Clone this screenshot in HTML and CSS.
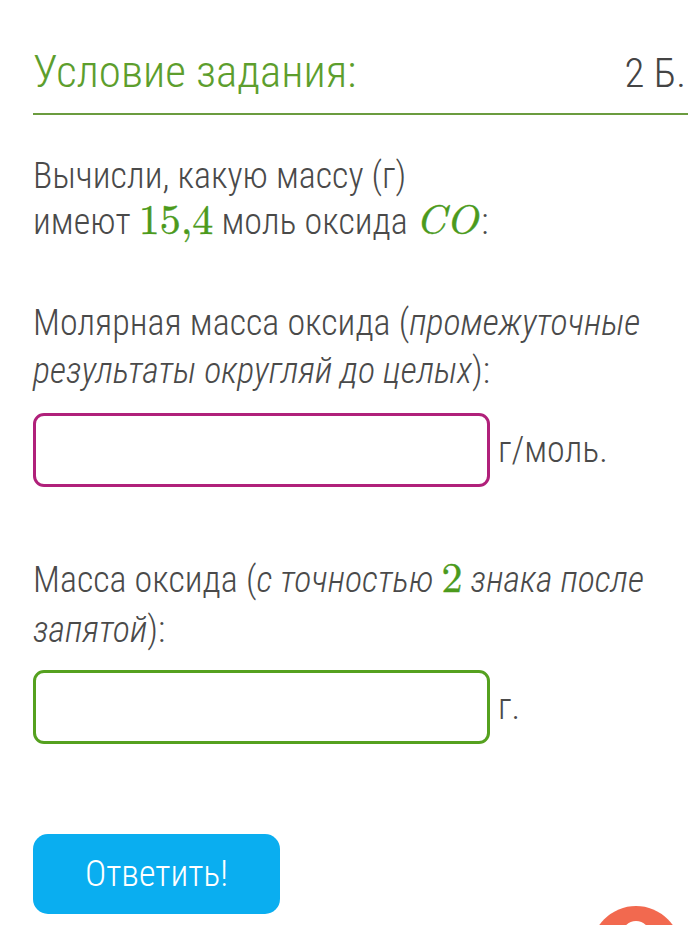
FILE: index.html
```html
<!DOCTYPE html>
<html lang="ru">
<head>
<meta charset="utf-8">
<link rel="stylesheet" href="styles.css">
</head>
<body>
<div class="page">
  <div class="header">
    <h1 class="title">Условие задания:</h1>
    <span class="points">2 Б.</span>
  </div>
  <p class="text q1">Вычисли, какую массу (г)<br>имеют <span class="m">15,4</span> моль оксида <span class="m mi">CO</span>:</p>
  <p class="text q2">Молярная масса оксида (<i>промежуточные результаты округляй до целых</i>):</p>
  <div class="answer a1">
    <div class="field field-pink"></div>
    <span class="unit">г/моль.</span>
  </div>
  <p class="text q3">Масса оксида (<i>с точностью <span class="m">2</span> знака после запятой</i>):</p>
  <div class="answer a2">
    <div class="field field-green"></div>
    <span class="unit">г.</span>
  </div>
  <button class="submit">Ответить!</button>
</div>
<div class="help"><span class="help-inner"></span></div>
</body>
</html>
```
FILE: styles.css
```css
html, body { margin: 0; padding: 0; background: #fff; }
body { width: 696px; height: 925px; overflow: hidden; position: relative; font-family: "Roboto Condensed", "Roboto", "Liberation Sans", sans-serif; font-weight: 300; color: #4a4a4a; }
.page { padding: 0 8px 0 33px; }
.header { display: flex; justify-content: space-between; align-items: baseline; border-bottom: 2px solid #6b9c3f; padding-top: 47px; padding-bottom: 15px; }
.title { margin: 0; font-size: 45px; font-weight: 300; color: #5d9e2d; line-height: 50px; }
.points { font-size: 41px; color: #444; line-height: 50px; margin-right: 2px; }
.text { margin: 0; font-size: 36px; line-height: 48px; }
.q1 { margin-top: 38px; line-height: 46px; width: 520px; }
.q2 { margin-top: 54px; }
.q3 { margin-top: 68px; line-height: 50px; }
.m { font-family: "Latin Modern Roman", "DejaVu Serif", "Liberation Serif", serif; color: #4b9a1c; font-weight: 400; font-style: normal; font-size: 42px; line-height: 0; -webkit-text-stroke: 0.4px #4b9a1c; }
.mi { font-style: italic; margin-right: 3px; }
i { font-style: italic; }
.answer { display: flex; align-items: center; gap: 8px; }
.a1 { margin-top: 18px; }
.a2 { margin-top: 15px; }
.field { box-sizing: border-box; width: 457px; height: 74px; border-radius: 11px; border: 3px solid #b0207a; background: #fff; }
.field-green { border-color: #55a11f; }
.unit { font-size: 36px; }
.submit { display: block; margin-top: 90px; width: 247px; height: 80px; border: 0; border-radius: 15px; background: #0aaef0; color: #fff; font-family: inherit; font-weight: 300; font-size: 36px; }
.help { position: absolute; left: 591px; top: 906px; width: 90px; height: 90px; border-radius: 50%; background: #f2694f; }
.help-inner { position: absolute; left: 31px; top: 15px; width: 28px; height: 28px; border-radius: 50%; background: #fff; }
```
